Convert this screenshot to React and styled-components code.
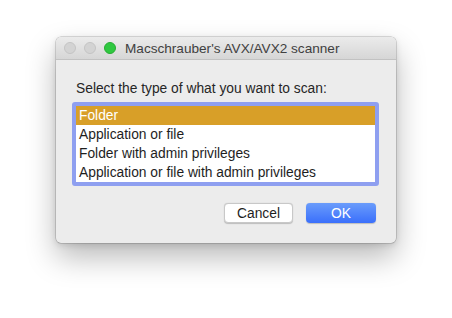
import React, { useState } from "react";
import styled, { createGlobalStyle } from "styled-components";

const GlobalStyle = createGlobalStyle`
  html, body {
    margin: 0;
    padding: 0;
    background: #ffffff;
  }
  body {
    font-family: "Liberation Sans", Arial, sans-serif;
  }
`;

const options = [
  "Folder",
  "Application or file",
  "Folder with admin privileges",
  "Application or file with admin privileges",
];

function App() {
  const [selected, setSelected] = useState(0);

  return (
    <Page>
      <GlobalStyle />
      <Window>
        <TitleBar>
          <Lights>
            <Light />
            <Light />
            <Light active />
          </Lights>
          <Title>Macschrauber's AVX/AVX2 scanner</Title>
        </TitleBar>
        <Content>
          <Label>Select the type of what you want to scan:</Label>
          <ListBox>
            {options.map((o, i) => (
              <Row key={o} selected={selected == i} onClick={() => setSelected(i)}>
                {o}
              </Row>
            ))}
          </ListBox>
          <Buttons>
            <Button>Cancel</Button>
            <Button primary>OK</Button>
          </Buttons>
        </Content>
      </Window>
    </Page>
  );
}

const Page = styled.div`
  width: 452px;
  height: 318px;
  padding: 37px 0 0 56px;
  box-sizing: border-box;
  background: #ffffff;
`;

const Window = styled.div`
  width: 340px;
  height: 206px;
  background: #ececec;
  border-radius: 5px;
  box-shadow: 0 0 0 0.5px rgba(0, 0, 0, 0.25), 0 14px 30px rgba(0, 0, 0, 0.28),
    0 2px 6px rgba(0, 0, 0, 0.12);
  overflow: hidden;
  display: flex;
  flex-direction: column;
`;

const TitleBar = styled.div`
  height: 22px;
  display: flex;
  align-items: center;
  background: linear-gradient(#ebebeb, #d6d6d6);
  border-bottom: 1px solid #c2c2c2;
  padding-left: 8px;
`;

const Lights = styled.div`
  display: flex;
  gap: 8px;
`;

const Light = styled.div`
  width: 12px;
  height: 12px;
  border-radius: 50%;
  box-sizing: border-box;
  background: ${(p) => (p.active ? "#2fc840" : "#d3d3d3")};
  border: 1px solid ${(p) => (p.active ? "#27ac33" : "#c4c4c4")};
`;

const Title = styled.div`
  margin-left: 9px;
  font-size: 13.6px;
  color: #404040;
`;

const Content = styled.div`
  flex: 1;
  display: flex;
  flex-direction: column;
  padding: 20px 17px 0 16px;
`;

const Label = styled.div`
  font-size: 13.8px;
  line-height: 17px;
  color: #262626;
  padding-left: 4px;
  margin-bottom: 5px;
`;

const ListBox = styled.div`
  background: #ffffff;
  border: 4px solid #8e9ff0;
  border-radius: 3px;
  display: flex;
  flex-direction: column;
`;

const Row = styled.div`
  height: 19px;
  line-height: 20px;
  padding-left: 3px;
  font-size: 13.8px;
  color: ${(p) => (p.selected ? "#ffffff" : "#1e1e1e")};
  background: ${(p) => (p.selected ? "#d89f28" : "transparent")};
`;

const Buttons = styled.div`
  display: flex;
  justify-content: flex-end;
  gap: 13px;
  margin-top: 17px;
  padding-right: 3px;
`;

const Button = styled.button`
  width: ${(p) => (p.primary ? "70px" : "69px")};
  height: 20px;
  border-radius: 4px;
  font-family: "Liberation Sans", Arial, sans-serif;
  font-size: 13.8px;
  padding: 0;
  color: ${(p) => (p.primary ? "#ffffff" : "#1e1e1e")};
  background: ${(p) =>
    p.primary ? "linear-gradient(#6a9cfb, #3a6ffb)" : "#ffffff"};
  border: ${(p) => (p.primary ? "none" : "1px solid #c8c8c8")};
  box-shadow: 0 0.5px 1px rgba(0, 0, 0, 0.2);
`;

export default App;
